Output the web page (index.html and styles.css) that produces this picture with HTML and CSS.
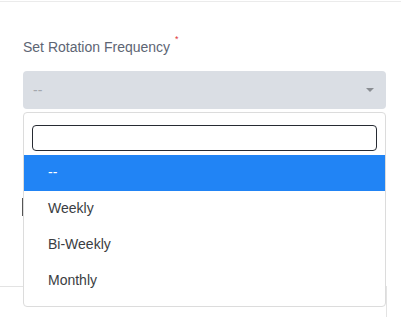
FILE: index.html
```html
<!DOCTYPE html>
<html lang="en">
  <head>
    <meta charset="UTF-8" />
    <title>Rotation frequency</title>
    <link rel="stylesheet" href="styles.css">
  </head>
  <body>
    <div class="page">
      <div class="form-group">
        <label class="field-label">Set Rotation Frequency<sup class="required">*</sup></label>
        <div class="select-box">
          <span class="select-value">--</span>
          <span class="select-arrow"></span>
        </div>
        <div class="hidden-row">
          <span class="checkbox"></span>
        </div>
      </div>
      <div class="footer-box"></div>

      <div class="dropdown">
        <div class="search">
          <input class="search-input" type="text" />
        </div>
        <ul class="options">
          <li class="option active">--</li>
          <li class="option">Weekly</li>
          <li class="option">Bi-Weekly</li>
          <li class="option">Monthly</li>
        </ul>
      </div>
    </div>
  </body>
</html>
```

FILE: styles.css
```css
html, body {
  margin: 0;
  padding: 0;
  background: #fff;
}
body {
  font-family: "Liberation Sans", Arial, sans-serif;
  overflow: hidden;
}
.page {
  position: relative;
  height: 317px;
  padding-top: 1px;
  box-sizing: border-box;
}
.form-group {
  border-top: 1px solid #ebebeb;
  padding: 35px 15px 0 23px;
}
.field-label {
  display: block;
  font-size: 14px;
  line-height: 20px;
  color: #5d6574;
}
.required {
  color: #e0353b;
  font-size: 9px;
  vertical-align: top;
  position: relative;
  top: -8px;
  margin-left: 5px;
}
.select-box {
  margin-top: 14px;
  height: 38px;
  background: #dadee4;
  border-radius: 4px;
  display: flex;
  align-items: center;
  justify-content: space-between;
  padding: 0 12px 0 10px;
}
.select-value {
  font-size: 14px;
  color: #a4a8ae;
}
.select-arrow {
  width: 0;
  height: 0;
  border-left: 4px solid transparent;
  border-right: 4px solid transparent;
  border-top: 4px solid #8a8d92;
}
.hidden-row {
  margin-top: 89px;
  height: 18px;
}
.checkbox {
  display: block;
  width: 16px;
  height: 18px;
  margin-left: -1px;
  border-left: 2px solid #555;
}
.footer-box {
  margin-top: 70px;
  width: 386px;
  height: 40px;
  border-top: 1px solid #e3e3e3;
  border-right: 1px solid #e3e3e3;
}
.dropdown {
  position: absolute;
  top: 112px;
  left: 23px;
  width: 363px;
  box-sizing: border-box;
  background: #fff;
  border: 1px solid #dcdcdc;
  border-radius: 4px;
  padding-bottom: 7px;
}
.search {
  padding: 12px 8px 4px 8px;
}
.search-input {
  display: block;
  width: 100%;
  box-sizing: border-box;
  height: 26px;
  border: 1.5px solid #272b33;
  border-radius: 4px;
  outline: none;
  margin: 0;
}
.options {
  list-style: none;
  margin: 0;
  padding: 0;
}
.option {
  height: 36px;
  line-height: 35px;
  padding-left: 24px;
  font-size: 14px;
  color: #3a3d42;
}
.option.active {
  background: #2184f5;
  color: #fff;
}
```
